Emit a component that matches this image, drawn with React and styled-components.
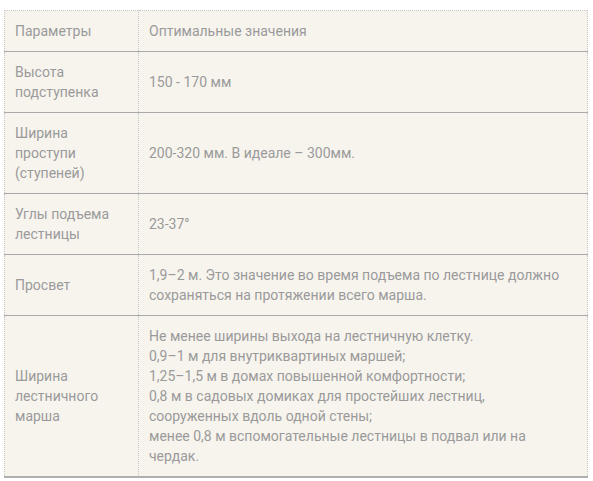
import React from "react";
import styled, { createGlobalStyle } from "styled-components";

const Global = createGlobalStyle`
  html, body { margin: 0; padding: 0; background: #ffffff; }
  body { font-family: Roboto, "Noto Sans", Arial, sans-serif; }
`;

const Wrap = styled.div`
  padding: 10px 5px 0 4px;
`;

const Table = styled.table`
  width: 584px;
  border-collapse: collapse;
  background: #f7f4ee;
  border: 1px dotted #c8c8c8;
  font-size: 14px;
  line-height: 20px;
  color: #9a9a9a;
`;

const Row = styled.tr`
  border-bottom: 1px solid #a9a9a9;
  &:last-child { border-bottom: 2px solid #b0b0b0; }
`;

const Cell = styled.td`
  padding: 10px;
  vertical-align: middle;
  text-align: left;
  width: ${(p) => (p.$first ? "113px" : "auto")};
  border-right: 1px dotted #c8c8c8;
  font-weight: 400;
`;

const rows = [
  ["Параметры", ["Оптимальные значения"]],
  ["Высота подступенка", ["150 - 170 мм"]],
  ["Ширина проступи (ступеней)", ["200-320 мм. В идеале – 300мм."]],
  ["Углы подъема лестницы", ["23-37°"]],
  ["Просвет", ["1,9–2 м. Это значение во время подъема по лестнице должно сохраняться на протяжении всего марша."]],
  [
    "Ширина лестничного марша",
    [
      "Не менее ширины выхода на лестничную клетку.",
      "0,9–1 м для внутриквартиных маршей;",
      "1,25–1,5 м в домах повышенной комфортности;",
      "0,8 м в садовых домиках для простейших лестниц, сооруженных вдоль одной стены;",
      "менее 0,8 м вспомогательные лестницы в подвал или на чердак.",
    ],
  ],
];

export default function App() {
  return (
    <Wrap>
      <Global />
      <Table>
        <tbody>
          {rows.map(([label, lines], i) => (
            <Row key={i}>
              <Cell $first>{label}</Cell>
              <Cell>
                {lines.map((l, j) => (
                  <React.Fragment key={j}>
                    {j > 0 && <br />}
                    {l}
                  </React.Fragment>
                ))}
              </Cell>
            </Row>
          ))}
        </tbody>
      </Table>
    </Wrap>
  );
}
